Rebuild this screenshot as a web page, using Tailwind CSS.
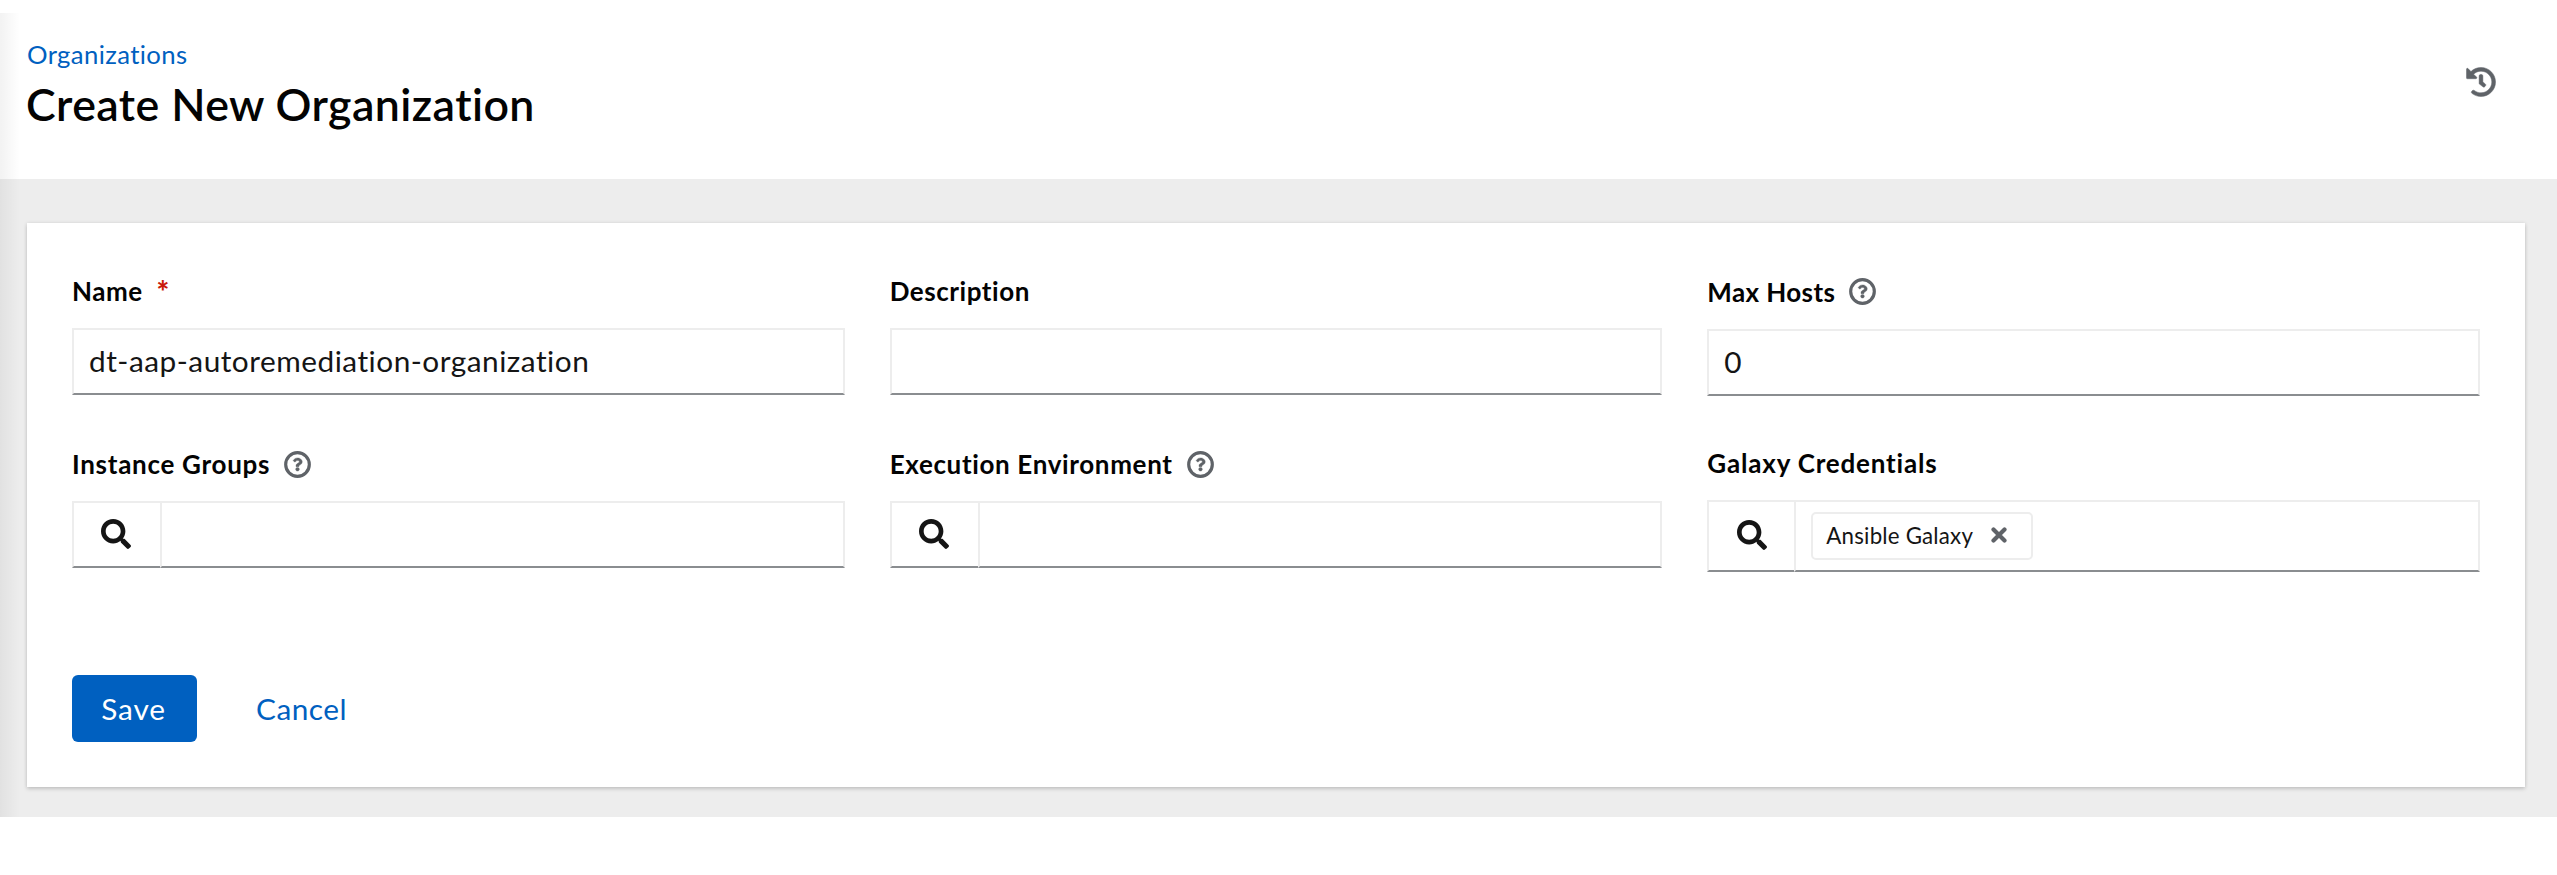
<!DOCTYPE html>
<html lang="en">
<head>
<meta charset="utf-8">
<title>Create New Organization</title>
<script src="https://cdn.jsdelivr.net/npm/@tailwindcss/browser@4"></script>
</head>
<body class="relative bg-white font-['Lato','Liberation_Sans',sans-serif] text-[#151515]">
<svg class="hidden">
  <symbol id="help" viewBox="0 0 512 512"><circle cx="256" cy="256" r="224" fill="none" stroke="currentColor" stroke-width="60"/><path transform="translate(256 256) scale(.84) translate(-256 -261)" fill="currentColor" stroke="currentColor" stroke-width="8" d="M363.244 200.800c0 67.052-72.421 68.084-72.421 92.863V300c0 6.627-5.373 12-12 12h-45.647c-6.627 0-12-5.373-12-12v-8.659c0-35.745 27.1-50.034 47.579-61.516 17.561-9.845 28.324-16.541 28.324-29.579 0-17.246-21.999-28.693-39.784-28.693-23.189 0-33.894 10.977-48.942 29.969-4.057 5.12-11.46 6.071-16.666 2.124l-27.824-21.098c-5.107-3.872-6.251-11.066-2.644-16.363C184.846 131.491 214.94 112 261.794 112c49.071 0 101.45 38.304 101.45 88.8zM298 368c0 23.159-18.841 42-42 42s-42-18.841-42-42 18.841-42 42-42 42 18.841 42 42z"/></symbol>
  <symbol id="search" viewBox="0 0 512 512"><path fill="currentColor" d="M505 442.700L405.300 343c-4.500-4.500-10.600-7-17-7H372c27.600-35.300 44-79.700 44-128C416 93.100 322.900 0 208 0S0 93.100 0 208s93.100 208 208 208c48.300 0 92.700-16.400 128-44v16.300c0 6.400 2.500 12.500 7 17l99.700 99.700c9.400 9.400 24.600 9.400 33.900 0l28.300-28.300c9.400-9.400 9.400-24.600.1-34zM208 336c-70.700 0-128-57.200-128-128 0-70.700 57.200-128 128-128 70.700 0 128 57.200 128 128 0 70.700-57.200 128-128 128z"/></symbol>
</svg>

<div class="relative mt-[13px] h-[804px] bg-[#ededed]">
  <header class="flex h-[166px] justify-between bg-white pl-[27px] pr-[61px]">
    <div class="pt-[25px]">
      <div class="h-[32px] text-[25.7px] leading-[32px] tracking-[0.38px] text-[#0060c0]">Organizations</div>
      <h1 class="-ml-px h-[54px] pt-[4px] text-[44.7px] font-semibold leading-[60px] tracking-[0.42px] text-[#030303]">Create New Organization</h1>
    </div>
    <svg class="mt-[54px] size-[30px] text-[#5f6368]" viewBox="0 0 512 512"><path fill="currentColor" stroke="currentColor" stroke-width="8" d="M504 255.531c.253 136.640-111.180 248.372-247.820 248.468-59.015.042-113.223-20.530-155.822-54.911-11.077-8.940-11.905-25.541-1.839-35.607l11.267-11.267c8.609-8.609 22.353-9.551 31.891-1.984C173.062 425.135 212.781 440 256 440c101.705 0 184-82.311 184-184 0-101.705-82.311-184-184-184-48.814 0-93.149 18.969-126.068 49.932l50.754 50.754c10.080 10.080 2.941 27.314-11.313 27.314H24c-8.837 0-16-7.163-16-16V38.627c0-14.254 17.234-21.393 27.314-11.314l49.372 49.372C129.209 34.136 189.552 8 256 8c136.810 0 247.747 110.780 248 247.531zm-180.912 78.784l9.823-12.630c8.138-10.463 6.253-25.542-4.210-33.679L288 256.349V152c0-13.255-10.745-24-24-24h-16c-13.255 0-24 10.745-24 24v135.651l65.409 50.874c10.463 8.137 25.541 6.253 33.679-4.210z"/></svg>
  </header>

  <main class="ml-[27px] mr-8 mt-[44px] h-[564px] bg-white px-[45px] pt-[45px] shadow-[0_2px_4px_0_rgba(3,3,3,0.16),0_0_4px_0_rgba(3,3,3,0.08)]">
    <div class="grid h-[304px] grid-cols-3 grid-rows-[173px_131px] gap-x-[45px]">
      <div>
        <div class="mb-[15px] flex h-[45px] items-center pt-px text-[26px] font-bold text-[#030303]"><span class="tracking-[0.5px]">Name</span><span class="ml-[14px] text-[30px] font-black leading-[30px] text-[#c9190b]">*</span></div>
        <div class="flex h-[67px] items-center border-2 border-[#ededed] border-b-[#8a8d90] px-[15px] text-[29.8px]"><span class="tracking-[0.5px]">dt-aap-autoremediation-organization</span></div>
      </div>
      <div>
        <div class="mb-[15px] flex h-[45px] items-center pt-px text-[26px] font-bold text-[#030303]"><span class="tracking-[0.55px]">Description</span></div>
        <div class="h-[67px] border-2 border-[#ededed] border-b-[#8a8d90]"></div>
      </div>
      <div>
        <div class="mb-[15px] mt-px flex h-[45px] items-center gap-[14px] text-[26px] font-bold text-[#030303]"><span class="pt-px tracking-[0.4px]">Max Hosts</span><svg class="size-[27px] text-[#5f6368]"><use href="#help"/></svg></div>
        <div class="flex h-[67px] items-center border-2 border-[#ededed] border-b-[#8a8d90] px-[15px] text-[29.8px]">0</div>
      </div>
      <div>
        <div class="mb-[14px] flex h-[46px] items-center gap-[14px] text-[26px] font-bold text-[#030303]"><span class="tracking-[0.72px]">Instance Groups</span><svg class="size-[27px] text-[#5f6368]"><use href="#help"/></svg></div>
        <div class="flex h-[67px]">
          <div class="flex w-[88px] items-center border-2 border-r-0 border-[#ededed] border-b-[#8a8d90] pl-[27px]"><svg class="-mt-0.5 size-[30px]"><use href="#search"/></svg></div>
          <div class="grow border-2 border-[#ededed] border-b-[#8a8d90]"></div>
        </div>
      </div>
      <div>
        <div class="mb-[14px] flex h-[46px] items-center gap-[14px] text-[26px] font-bold text-[#030303]"><span class="tracking-[0.65px]">Execution Environment</span><svg class="size-[27px] text-[#5f6368]"><use href="#help"/></svg></div>
        <div class="flex h-[67px]">
          <div class="flex w-[88px] items-center border-2 border-r-0 border-[#ededed] border-b-[#8a8d90] pl-[27px]"><svg class="-mt-0.5 size-[30px]"><use href="#search"/></svg></div>
          <div class="grow border-2 border-[#ededed] border-b-[#8a8d90]"></div>
        </div>
      </div>
      <div>
        <div class="mb-[15px] flex h-[44px] items-center text-[26px] font-bold text-[#030303]"><span class="tracking-[0.82px]">Galaxy Credentials</span></div>
        <div class="flex h-[72px]">
          <div class="flex w-[87px] items-center border-2 border-r-0 border-[#ededed] border-b-[#8a8d90] pl-7"><svg class="-mt-0.5 size-[30px]"><use href="#search"/></svg></div>
          <div class="grow border-2 border-[#ededed] border-b-[#8a8d90] pl-[15px] pt-[10px]">
            <div class="flex h-[48px] w-[222px] items-center rounded-[5px] border-2 border-[#ededed] pl-[13px] text-[22.3px]"><span class="w-[165px] tracking-[0.2px]">Ansible Galaxy</span><svg class="-mt-0.5 size-4 text-[#5f6368]" viewBox="0 0 16 16"><path d="M2.500 2.500L13.500 13.500M13.500 2.500L2.500 13.500" stroke="currentColor" stroke-width="4.200" stroke-linecap="round"/></svg></div>
          </div>
        </div>
      </div>
    </div>
    <div class="mt-[103px] flex h-[67px] text-[29.8px] leading-[65px]">
      <button class="w-[125px] rounded-[6px] bg-[#0060c0] pr-0.5 text-center tracking-[0.9px] text-white">Save</button>
      <button class="ml-[59px] tracking-[0.5px] text-[#0060c0]">Cancel</button>
    </div>
  </main>
  <div class="absolute left-0 top-0 h-full w-5 bg-linear-to-r from-black/5 to-transparent"></div>
</div>
</body>
</html>
